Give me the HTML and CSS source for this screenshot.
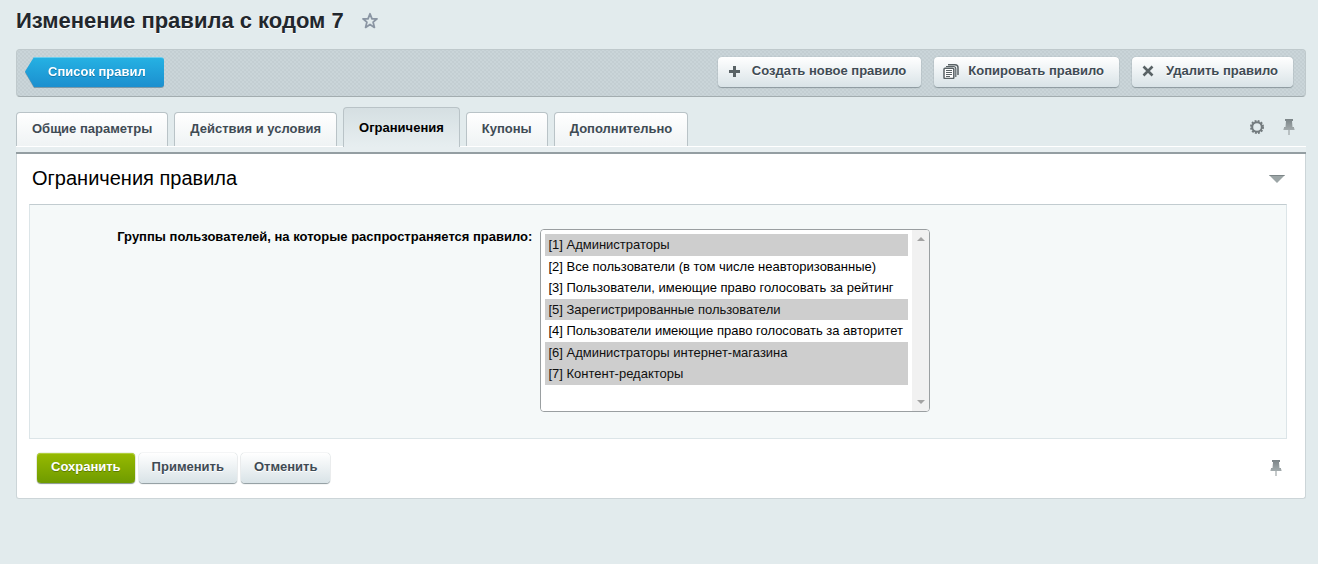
FILE: index.html
```
<!DOCTYPE html>
<html lang="ru">
<head>
<meta charset="utf-8">
<title>Изменение правила с кодом 7</title>
<link rel="stylesheet" href="styles.css">
</head>
<body>
<svg class="sprite" aria-hidden="true">
  <defs>
    <linearGradient id="metal" x1="0" y1="0" x2="0" y2="1"><stop offset="0" stop-color="#7b8487"/><stop offset="1" stop-color="#a3abad"/></linearGradient>
  </defs>
  <symbol id="pin" viewBox="0 0 12 18">
    <path fill="url(#metal)" d="M2 1h8v2H9l.5 6H11v1l.5 1v1H.5v-1L1 10V9h1.500L3 3H2z"/>
    <path fill="#8d9597" d="M5.500 12h1v5h-1z"/>
  </symbol>
</svg>
<header class="title-row">
  <h1 class="title">Изменение правила с кодом 7</h1>
  <button class="icon-button" type="button" aria-label="Добавить в избранное">
    <svg width="18" height="20" viewBox="0 0 18 18"><path fill="none" stroke="#8a95a3" stroke-width="1.800" stroke-linejoin="round" d="M9 1.800l2 5h5l-3.900 3.300 1.300 5.300L9 12.500l-4.400 2.900 1.300-5.300L2 6.800h5z"/></svg>
  </button>
</header>
<nav class="toolbar" aria-label="Действия с правилом">
  <a class="back" href="#list">
    <svg class="back-arrow" viewBox="0 0 10 30" preserveAspectRatio="none" aria-hidden="true">
      <defs><linearGradient id="blue" x1="0" y1="0" x2="0" y2="1"><stop offset="0" stop-color="#25b1e3"/><stop offset="1" stop-color="#1c8fcf"/></linearGradient></defs>
      <path fill="url(#blue)" d="M10 0H9L0 14.500 9 30h1z"/><path fill="none" stroke="#6ccdee" d="M10 .5H9"/>
    </svg>
    <span class="back-label">Список правил</span>
  </a>
  <div class="toolbar-actions">
    <a class="button tool" href="#new">
      <svg width="16" height="16" viewBox="0 0 16 16" aria-hidden="true"><path fill="#596265" d="M6 3h3v4h4v3H9v4H6v-4H2V7h4z"/></svg>
      Создать новое правило</a>
    <a class="button tool" href="#copy">
      <svg width="16" height="16" viewBox="0 0 16 16" aria-hidden="true"><path fill="none" stroke="#596265" stroke-width="1.500" d="M5 1.700h7q3 0 3 3V12"/><path fill="none" stroke="#596265" stroke-width="1.200" d="M3 3.500h7.500q2.300 0 2.300 2.300V14"/><rect x="1" y="5.200" width="9.800" height="10.300" rx="1" fill="#fff" stroke="#596265" stroke-width="1.500"/><path stroke="#596265" d="M3 7.500h6M3 9.500h6M3 11.500h6M3 13.500h4"/></svg>
      Копировать правило</a>
    <a class="button tool" href="#delete">
      <svg width="16" height="16" viewBox="0 0 16 16" aria-hidden="true"><path stroke="#596265" stroke-width="2.600" d="M2.500 3.500l9 9M11.500 3.500l-9 9"/></svg>
      Удалить правило</a>
  </div>
</nav>
<div class="tabs-row">
  <div class="tabs" role="tablist">
    <button class="tab" type="button" role="tab">Общие параметры</button>
    <button class="tab" type="button" role="tab">Действия и условия</button>
    <button class="tab tab-active" type="button" role="tab" aria-selected="true">Ограничения</button>
    <button class="tab" type="button" role="tab">Купоны</button>
    <button class="tab" type="button" role="tab">Дополнительно</button>
  </div>
  <div class="tab-icons">
    <button class="icon-button" type="button" aria-label="Настройки">
      <svg width="16" height="16" viewBox="0 0 16 16"><circle cx="8" cy="8" r="6" fill="none" stroke="#737b7e" stroke-width="2" stroke-dasharray="1.900 1.240"/><circle cx="8" cy="8" r="4.800" fill="none" stroke="#737b7e" stroke-width="2"/></svg>
    </button>
    <button class="icon-button" type="button" aria-label="Закрепить вкладки"><svg width="12" height="18"><use href="#pin"/></svg></button>
  </div>
</div>
<form class="panel">
  <div class="panel-head">
    <h2 class="panel-title">Ограничения правила</h2>
    <button class="icon-button" type="button" aria-label="Свернуть">
      <svg width="16" height="8" viewBox="0 0 16 8"><path fill="#9ca5a6" d="M0 0h16L8 8z"/><path fill="#7c8587" d="M0 0h16l-1 1H1z"/></svg>
    </button>
  </div>
  <div class="fields">
    <label class="field-label" for="groups">Группы пользователей, на которые распространяется правило:</label>
    <div class="listbox">
      <select class="list" id="groups" multiple size="8">
        <option class="item" selected>[1] Администраторы</option>
        <option class="item">[2] Все пользователи (в том числе неавторизованные)</option>
        <option class="item">[3] Пользователи, имеющие право голосовать за рейтинг</option>
        <option class="item" selected>[5] Зарегистрированные пользователи</option>
        <option class="item">[4] Пользователи имеющие право голосовать за авторитет</option>
        <option class="item" selected>[6] Администраторы интернет-магазина</option>
        <option class="item" selected>[7] Контент-редакторы</option>
      </select>
      <div class="scrollbar" aria-hidden="true">
        <svg width="8" height="4" viewBox="0 0 8 4"><path fill="#a3a3a3" d="M0 4h8L4 0z"/></svg>
        <svg width="8" height="4" viewBox="0 0 8 4"><path fill="#a3a3a3" d="M0 0h8L4 4z"/></svg>
      </div>
    </div>
  </div>
  <div class="panel-foot">
    <button class="button save" type="submit">Сохранить</button>
    <button class="button" type="button">Применить</button>
    <button class="button" type="button">Отменить</button>
    <button class="icon-button foot-pin" type="button" aria-label="Закрепить панель"><svg width="12" height="18"><use href="#pin"/></svg></button>
  </div>
</form>
</body>
</html>
```
FILE: styles.css
```
* { box-sizing: border-box; }
body {
  margin: 0;
  padding: 8px 12px 0 16px;
  background: #e2ebed;
  color: #000;
  font: 13px/16px "Liberation Sans", Arial, sans-serif;
}
.sprite { position: absolute; width: 0; height: 0; }
.icon-button { display: flex; padding: 0; border: 0; background: none; }
.title-row { display: flex; align-items: center; gap: 17px; height: 41px; padding-bottom: 16px; }
.title { margin: 0; font-size: 22px; line-height: 26px; color: #22272d; text-shadow: 0 1px 0 #fff; }

.toolbar {
  display: flex;
  align-items: center;
  justify-content: space-between;
  height: 48px;
  padding: 0 12px 2px 8px;
  border: 1px solid #bfc9cc;
  border-bottom-color: #a3adb0;
  border-radius: 4px;
  background-color: #cad5d9;
  background-image: radial-gradient(circle, #b3c0c5, transparent 1px), radial-gradient(circle, #b3c0c5, transparent 1px);
  background-size: 4px 4px;
  background-position: 0 0, 2px 2px;
}
.back { display: flex; height: 30px; color: #fff; font-weight: bold; text-decoration: none; filter: drop-shadow(0 1px 0 #7d99a8); }
.back-arrow { width: 10px; height: 30px; }
.back-label {
  padding: 6px 18px 0 13px;
  border-top: 1px solid #6ccdee;
  border-radius: 0 3px 3px 0;
  background: linear-gradient(#25b1e3, #1c8fcf);
  text-shadow: 0 1px 0 #1679aa;
}
.toolbar-actions { display: flex; gap: 13px; }
.button {
  display: flex;
  justify-content: center;
  height: 30px;
  padding: 6px 13px 0;
  border: 0;
  border-radius: 4px;
  background: linear-gradient(#fff, #d9e3e7);
  box-shadow: 0 0 1px #8c9ba1, 0 1px 1px #8c989d;
  color: #3f4b54;
  font: bold 13px/16px "Liberation Sans", Arial, sans-serif;
  text-decoration: none;
  text-shadow: 0 1px 0 #fff;
}
.tool { gap: 9px; padding: 6px 15px 0 9px; }

.tabs-row {
  display: flex;
  justify-content: space-between;
  margin-top: 10px;
  height: 47px;
  border-bottom: 2px solid #949ea2;
  background: linear-gradient(#fff, #fff) 0 39px / 100% 1px no-repeat, linear-gradient(#e7eef0, #e7eef0) 0 40px / 100% 5px no-repeat;
}
.tabs { display: flex; align-items: flex-end; gap: 6px; height: 39px; }
.tab {
  height: 34px;
  padding: 0 15px 2px;
  border: 1px solid #b9c3c7;
  border-bottom: 0;
  border-radius: 4px 4px 0 0;
  background: linear-gradient(#fff, #eff3f4);
  color: #3f4b54;
  font: bold 13px/16px "Liberation Sans", Arial, sans-serif;
}
.tab-active { height: 40px; margin-bottom: -1px; padding-bottom: 0; background: linear-gradient(#d5dfe2, #e7eef0); color: #000; }
.tab-icons { display: flex; align-items: center; gap: 18px; height: 40px; padding-right: 11px; }

.panel { border: 1px solid #ccd5d8; border-top: 0; border-radius: 0 0 3px 3px; background: #fff; padding: 0 18px 0 12px; }
.panel-head { display: flex; align-items: center; justify-content: space-between; height: 50px; padding: 0 2px 0 3px; }
.panel-title { margin: 0; padding-bottom: 2px; font-size: 20px; line-height: 24px; font-weight: normal; }
.fields {
  display: grid;
  grid-template-columns: 40% 1fr;
  gap: 8px;
  padding: 24px 0 26px;
  border: 1px solid #dce5e8;
  border-top-color: #c2ccd0;
  background: #f5f9f9;
}
.field-label { font-weight: bold; text-align: right; }
.listbox { display: flex; justify-self: start; border: 1px solid #9a9fa1; border-radius: 4px; background: #fff; overflow: hidden; }
.list {
  height: 181px;
  padding: 4px;
  border: 0;
  outline: 0;
  background: #fff;
  color: #000;
  font: 13px/16px "Liberation Sans", Arial, sans-serif;
  overflow: hidden;
}
.item { height: 22px; padding: 3px 5px 0 3px; }
.item:nth-child(even) { height: 21px; }
.scrollbar { display: flex; flex-direction: column; justify-content: space-between; align-items: center; width: 17px; padding: 7px 0; background: #f1f1f1; }
.panel-foot { display: flex; align-items: center; gap: 4px; height: 59px; padding: 0 5px 2px 8px; }
.save { padding: 6px 14px 0; background: linear-gradient(#97ba00, #6f9b00); box-shadow: 0 0 1px #5b7e00, 0 1px 1px #8c989d, inset 0 1px 0 #b1cf3b; color: #fff; text-shadow: 0 1px 0 #5c7d00; }
.foot-pin { margin-left: auto; }
```
